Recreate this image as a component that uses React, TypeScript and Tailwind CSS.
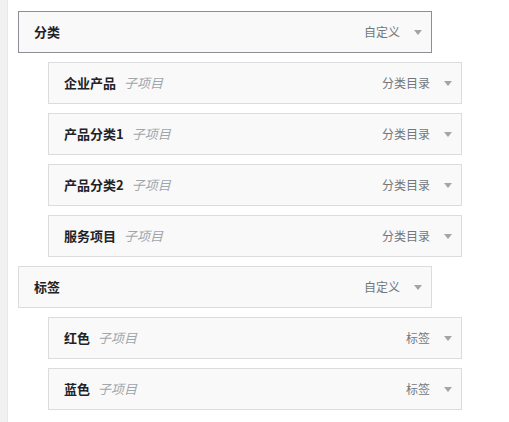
import React from "react";

type Item = { title: string; type: string; child: boolean; active?: boolean };

const items: Item[] = [
  { title: "分类", type: "自定义", child: false, active: true },
  { title: "企业产品", type: "分类目录", child: true },
  { title: "产品分类1", type: "分类目录", child: true },
  { title: "产品分类2", type: "分类目录", child: true },
  { title: "服务项目", type: "分类目录", child: true },
  { title: "标签", type: "自定义", child: false },
  { title: "红色", type: "标签", child: true },
  { title: "蓝色", type: "标签", child: true },
];

function Arrow() {
  return (
    <svg width="8" height="5" viewBox="0 0 8 5" className="block">
      <path d="M0 0 H8 L4 5 Z" fill="#a0a5aa" />
    </svg>
  );
}

function Row({ item }: { item: Item }) {
  return (
    <div
      className={
        "w-[414px] h-[42px] flex items-center border pl-[15px] pr-[9px] " +
        (item.child ? "ml-[30px] " : "") +
        (item.active ? "border-[#8c8f94] bg-[#f9f9f9]" : "border-[#dcdcde] bg-[#f9f9f9]")
      }
    >
      <span className="font-bold text-[13px] text-[#1d2327]">{item.title}</span>
      {item.child && (
        <span className="italic text-[13px] text-[#a0a5aa] ml-[8px]">子项目</span>
      )}
      <span className="ml-auto text-[12px] text-[#72777c]">{item.type}</span>
      <span className="ml-[14px]">
        <Arrow />
      </span>
    </div>
  );
}

export default function App() {
  return (
    <div
      className="w-[509px] h-[422px] bg-white flex overflow-hidden"
      style={{ fontFamily: '"Noto Sans CJK SC", "Noto Sans", sans-serif' }}
    >
      <div className="w-[8px] h-full bg-[#f1f1f1] border-r border-[#e8e8e8]" />
      <div className="flex flex-col gap-[9px] pt-[11px] pl-[10px]">
        {items.map((it, i) => (
          <Row key={i} item={it} />
        ))}
      </div>
    </div>
  );
}
